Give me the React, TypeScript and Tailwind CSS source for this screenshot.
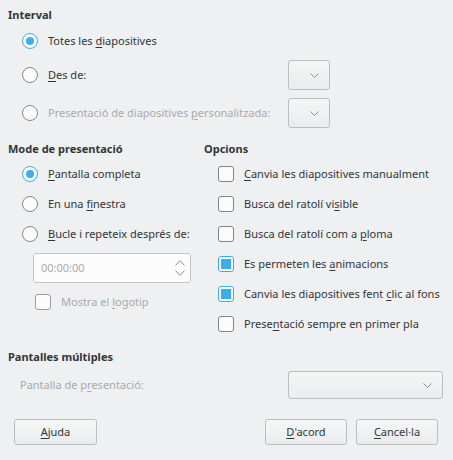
import React from 'react';

const text = 'text-[#31363b]';
const dim = 'text-[#a8abad]';

function U({ children }: { children: React.ReactNode }) {
  return <span className="underline underline-offset-[1.5px] decoration-1">{children}</span>;
}

function Radio({ checked }: { checked?: boolean }) {
  return (
    <span
      className={`flex h-4 w-4 shrink-0 items-center justify-center rounded-full border bg-[#fcfcfc] ${
        checked ? 'border-[#3daee9]' : 'border-[#85898d]'
      }`}
    >
      {checked && <span className="h-2 w-2 rounded-full bg-[#3daee9]" />}
    </span>
  );
}

function Check({ checked, disabled }: { checked?: boolean; disabled?: boolean }) {
  return (
    <span
      className={`flex h-4 w-4 shrink-0 items-center justify-center rounded-[3px] border bg-[#fcfcfc] ${
        checked ? 'border-[#3daee9]' : disabled ? 'border-[#9a9da0]' : 'border-[#80858a]'
      }`}
    >
      {checked && <span className="h-2.5 w-2.5 bg-[#3daee9]" />}
    </span>
  );
}

function Chevron({ className = '', w = 9, h = 5 }: { className?: string; w?: number; h?: number }) {
  return (
    <svg width={w} height={h} viewBox={`0 0 ${w} ${h}`} className={className}>
      <path d={`M0.5 0.5 L${w / 2} ${h - 0.5} L${w - 0.5} 0.5`} fill="none" stroke="#8a8e91" strokeWidth="1" />
    </svg>
  );
}

function Combo({ className = '' }: { className?: string }) {
  return (
    <div
      className={`flex items-center justify-end rounded-[3px] border border-[#bcbebf] bg-gradient-to-b from-[#f4f5f5] to-[#ebeced] pr-2.5 ${className}`}
    >
      <Chevron />
    </div>
  );
}

function Button({ children, className = '' }: { children: React.ReactNode; className?: string }) {
  return (
    <div
      className={`flex h-[26px] items-center justify-center rounded-[3px] border border-[#bcbebf] bg-gradient-to-b from-[#f5f6f6] to-[#eaebec] ${text} ${className}`}
    >
      {children}
    </div>
  );
}

function Header({ children }: { children: React.ReactNode }) {
  return <div className={`flex h-[14px] items-center font-bold ${text}`}>{children}</div>;
}

export default function App() {
  return (
    <div
      className="h-[460px] w-[453px] bg-[#eff0f1] pl-2 pt-2 text-[11px]"
      style={{ fontFamily: '"Noto Sans", sans-serif' }}
    >
      <Header>Interval</Header>
      <div className="ml-[14px] mt-[6px] flex h-[26px] items-center gap-2.5">
        <Radio checked />
        <span className={text}>
          Totes les <U>d</U>iapositives
        </span>
      </div>
      <div className="ml-[14px] mt-[6px] flex h-[30px] items-center">
        <div className="flex w-[266px] items-center gap-2.5">
          <Radio />
          <span className={text}>
            <U>D</U>es de:
          </span>
        </div>
        <Combo className="h-[30px] w-[42px]" />
      </div>
      <div className="ml-[14px] mt-[8px] flex h-[30px] items-center">
        <div className="flex w-[266px] items-center gap-2.5">
          <Radio />
          <span className={dim}>
            Presentació de diapositives <U>p</U>ersonalitzada:
          </span>
        </div>
        <Combo className="h-[30px] w-[42px]" />
      </div>

      <div className="mt-[14px] grid grid-cols-[196px_1fr]">
        <div>
          <Header>Mode de presentació</Header>
          <div className="ml-[14px] mt-[3px]">
            <div className="flex h-[30px] items-center gap-2.5">
              <Radio checked />
              <span className={text}>
                <U>P</U>antalla completa
              </span>
            </div>
            <div className="flex h-[30px] items-center gap-2.5">
              <Radio />
              <span className={text}>
                En una <U>f</U>inestra
              </span>
            </div>
            <div className="flex h-[30px] items-center gap-2.5">
              <Radio />
              <span className={text}>
                <U>B</U>ucle i repeteix després de:
              </span>
            </div>
          </div>
          <div className="ml-[25px] mt-[4px] flex h-[30px] w-[158px] items-center justify-between rounded-[3px] border border-[#c4c6c8] bg-[#fcfcfc] pl-[7px] pr-[5px]">
            <span className={dim}>00:00:00</span>
            <div className="flex flex-col gap-[4px]">
              <Chevron className="rotate-180" w={10} h={6} />
              <Chevron w={10} h={6} />
            </div>
          </div>
          <div className="ml-[27px] mt-[9px] flex h-[20px] items-center gap-2.5">
            <Check disabled />
            <span className={dim}>
              Mostra el <U>l</U>ogotip
            </span>
          </div>
        </div>
        <div>
          <Header>Opcions</Header>
          <div className="ml-[14px] mt-[3px]">
            {[
              [<><U>C</U>anvia les diapositives manualment</>, false],
              [<>Busca del ratolí vi<U>s</U>ible</>, false],
              [<>Busca del ratolí com a <U>p</U>loma</>, false],
              [<>Es permeten les <U>a</U>nimacions</>, true],
              [<>Canvia les diapositives fent <U>c</U>lic al fons</>, true],
              [<>Prese<U>n</U>tació sempre en primer pla</>, false],
            ].map(([label, checked], i) => (
              <div key={i} className="flex h-[30px] items-center gap-2.5">
                <Check checked={checked as boolean} />
                <span className={text}>{label as React.ReactNode}</span>
              </div>
            ))}
          </div>
        </div>
      </div>

      <div className="mt-[11px]">
        <Header>Pantalles múltiples</Header>
      </div>
      <div className="mt-[7px] flex h-[28px] items-center">
        <span className={`ml-3 w-[268px] ${dim}`}>
          Pantalla de p<U>r</U>esentació:
        </span>
        <Combo className="h-[28px] w-[155px]" />
      </div>

      <div className="mt-[20px] flex items-center pr-[15px]">
        <Button className="ml-[6px] w-[83px]">
          <U>A</U>juda
        </Button>
        <div className="flex-1" />
        <Button className="w-[82px]">
          <U>D</U>'acord
        </Button>
        <Button className="ml-[9px] w-[82px]">
          <U>C</U>ancel·la
        </Button>
      </div>
    </div>
  );
}
